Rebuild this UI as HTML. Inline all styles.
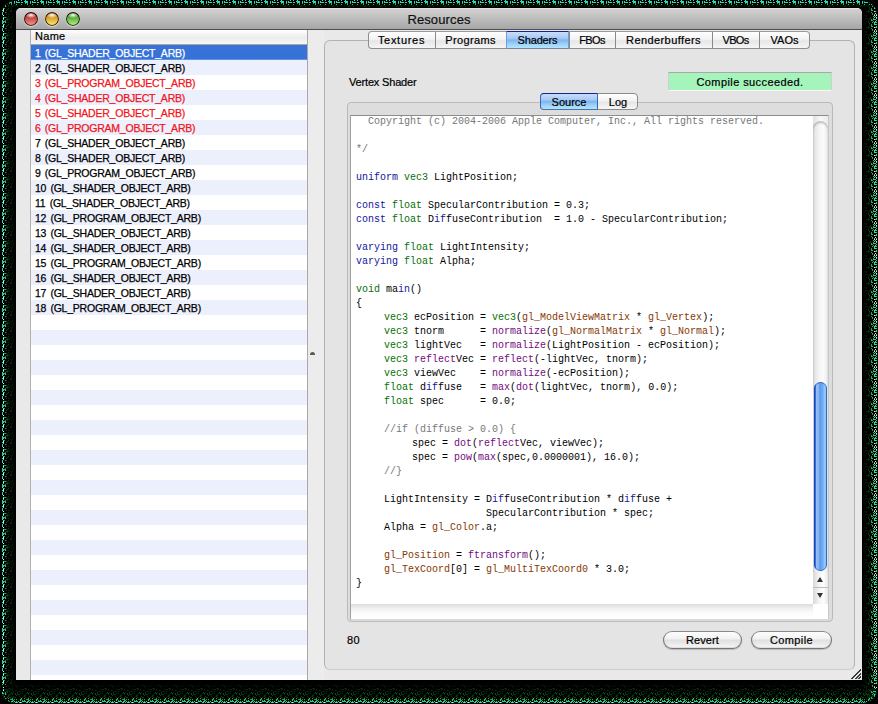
<!DOCTYPE html><html><head><meta charset='utf-8'><style>
*{margin:0;padding:0;box-sizing:border-box}
html,body{width:878px;height:704px;overflow:hidden;background:#000}
body{position:relative;font-family:"Liberation Sans", sans-serif;}
.a{position:absolute}
.t{position:absolute;white-space:pre;font-family:"Liberation Sans", sans-serif;font-size:11px;line-height:14px;color:#000;-webkit-text-stroke:0.2px currentColor}
.code{position:absolute;left:351px;top:116px;width:462px;height:488px;background:#fff;overflow:hidden}
.cl{position:absolute;left:5px;white-space:pre;font-family:"Liberation Mono", monospace;font-size:10px;line-height:14px;color:#000;tab-size:28px;-moz-tab-size:28px}
.k{color:#1414a0} .ty{color:#067006} .f{color:#720a82} .g{color:#863804} .c{color:#777777}
.tl{position:absolute;width:14px;height:14px;border-radius:50%}
</style></head><body><svg class="a" style="left:0;top:0" width="878" height="704"><defs><pattern id="pb" patternUnits="userSpaceOnUse" width="16" height="24" patternTransform="translate(0,680)"><rect x="0" y="22" width="1" height="1" fill="#14e0ea"/><rect x="0" y="21" width="1" height="1" fill="#30d860"/><rect x="0" y="19" width="1" height="1" fill="#20b848"/><rect x="0" y="15" width="1" height="1" fill="#0a4317"/><rect x="0" y="10" width="1" height="1" fill="#031908"/><rect x="0" y="7" width="1" height="1" fill="#041c09"/><rect x="0" y="6" width="1" height="1" fill="#031908"/><rect x="0" y="5" width="1" height="1" fill="#021105"/><rect x="1" y="22" width="1" height="1" fill="#30d860"/><rect x="1" y="14" width="1" height="1" fill="#072f10"/><rect x="1" y="13" width="1" height="1" fill="#073010"/><rect x="1" y="12" width="1" height="1" fill="#073211"/><rect x="1" y="4" width="1" height="1" fill="#010802"/><rect x="2" y="21" width="1" height="1" fill="#14e0ea"/><rect x="2" y="14" width="1" height="1" fill="#083b14"/><rect x="2" y="11" width="1" height="1" fill="#041c09"/><rect x="2" y="6" width="1" height="1" fill="#031808"/><rect x="2" y="5" width="1" height="1" fill="#010d04"/><rect x="3" y="22" width="1" height="1" fill="#30d860"/><rect x="3" y="16" width="1" height="1" fill="#073010"/><rect x="3" y="15" width="1" height="1" fill="#05220b"/><rect x="3" y="14" width="1" height="1" fill="#083612"/><rect x="3" y="11" width="1" height="1" fill="#04200b"/><rect x="3" y="6" width="1" height="1" fill="#031808"/><rect x="4" y="22" width="1" height="1" fill="#f0e8e8"/><rect x="4" y="20" width="1" height="1" fill="#2cc858"/><rect x="4" y="19" width="1" height="1" fill="#2cc858"/><rect x="4" y="17" width="1" height="1" fill="#083713"/><rect x="4" y="13" width="1" height="1" fill="#062d0f"/><rect x="4" y="11" width="1" height="1" fill="#062c0f"/><rect x="4" y="9" width="1" height="1" fill="#05220b"/><rect x="5" y="22" width="1" height="1" fill="#14e0ea"/><rect x="5" y="19" width="1" height="1" fill="#18a040"/><rect x="5" y="18" width="1" height="1" fill="#2cc858"/><rect x="5" y="9" width="1" height="1" fill="#04210b"/><rect x="5" y="6" width="1" height="1" fill="#031708"/><rect x="5" y="5" width="1" height="1" fill="#010a03"/><rect x="6" y="21" width="1" height="1" fill="#14e0ea"/><rect x="6" y="20" width="1" height="1" fill="#20b848"/><rect x="6" y="17" width="1" height="1" fill="#083913"/><rect x="6" y="13" width="1" height="1" fill="#05220b"/><rect x="6" y="11" width="1" height="1" fill="#073211"/><rect x="6" y="9" width="1" height="1" fill="#031a09"/><rect x="6" y="4" width="1" height="1" fill="#010802"/><rect x="7" y="21" width="1" height="1" fill="#14e0ea"/><rect x="7" y="16" width="1" height="1" fill="#05250c"/><rect x="7" y="9" width="1" height="1" fill="#05250c"/><rect x="7" y="5" width="1" height="1" fill="#010c04"/><rect x="7" y="4" width="1" height="1" fill="#000602"/><rect x="8" y="21" width="1" height="1" fill="#30d860"/><rect x="8" y="20" width="1" height="1" fill="#2cc858"/><rect x="8" y="18" width="1" height="1" fill="#18a040"/><rect x="8" y="16" width="1" height="1" fill="#0a4919"/><rect x="8" y="15" width="1" height="1" fill="#073010"/><rect x="8" y="8" width="1" height="1" fill="#05230c"/><rect x="8" y="4" width="1" height="1" fill="#010a03"/><rect x="9" y="21" width="1" height="1" fill="#30d860"/><rect x="9" y="17" width="1" height="1" fill="#0a4819"/><rect x="9" y="15" width="1" height="1" fill="#062e10"/><rect x="9" y="14" width="1" height="1" fill="#083612"/><rect x="9" y="10" width="1" height="1" fill="#031708"/><rect x="9" y="9" width="1" height="1" fill="#031607"/><rect x="9" y="8" width="1" height="1" fill="#05250c"/><rect x="9" y="6" width="1" height="1" fill="#021206"/><rect x="10" y="22" width="1" height="1" fill="#30d860"/><rect x="10" y="19" width="1" height="1" fill="#18a040"/><rect x="10" y="17" width="1" height="1" fill="#05270d"/><rect x="10" y="13" width="1" height="1" fill="#072f10"/><rect x="10" y="9" width="1" height="1" fill="#06290e"/><rect x="10" y="8" width="1" height="1" fill="#041e0a"/><rect x="11" y="22" width="1" height="1" fill="#14e0ea"/><rect x="11" y="21" width="1" height="1" fill="#30d860"/><rect x="11" y="19" width="1" height="1" fill="#20b848"/><rect x="11" y="13" width="1" height="1" fill="#072f10"/><rect x="11" y="12" width="1" height="1" fill="#083713"/><rect x="11" y="5" width="1" height="1" fill="#020f05"/><rect x="11" y="4" width="1" height="1" fill="#010702"/><rect x="12" y="21" width="1" height="1" fill="#14e0ea"/><rect x="12" y="20" width="1" height="1" fill="#18a040"/><rect x="12" y="19" width="1" height="1" fill="#20b848"/><rect x="12" y="18" width="1" height="1" fill="#20b848"/><rect x="12" y="17" width="1" height="1" fill="#062d0f"/><rect x="12" y="14" width="1" height="1" fill="#062c0f"/><rect x="12" y="13" width="1" height="1" fill="#0a4417"/><rect x="12" y="10" width="1" height="1" fill="#05250c"/><rect x="12" y="9" width="1" height="1" fill="#04210b"/><rect x="12" y="6" width="1" height="1" fill="#010c04"/><rect x="13" y="22" width="1" height="1" fill="#30d860"/><rect x="13" y="20" width="1" height="1" fill="#2cc858"/><rect x="13" y="16" width="1" height="1" fill="#093d15"/><rect x="13" y="12" width="1" height="1" fill="#073311"/><rect x="13" y="5" width="1" height="1" fill="#010903"/><rect x="14" y="21" width="1" height="1" fill="#14e0ea"/><rect x="14" y="19" width="1" height="1" fill="#18a040"/><rect x="14" y="17" width="1" height="1" fill="#094217"/><rect x="14" y="5" width="1" height="1" fill="#021206"/><rect x="14" y="4" width="1" height="1" fill="#010a03"/><rect x="15" y="22" width="1" height="1" fill="#14e0ea"/><rect x="15" y="17" width="1" height="1" fill="#0a4618"/><rect x="15" y="14" width="1" height="1" fill="#0b4a19"/><rect x="15" y="13" width="1" height="1" fill="#094217"/><rect x="15" y="10" width="1" height="1" fill="#072f10"/><rect x="15" y="6" width="1" height="1" fill="#020e04"/><rect x="15" y="5" width="1" height="1" fill="#021306"/></pattern><pattern id="pl" patternUnits="userSpaceOnUse" width="16" height="16"><rect x="8" y="0" width="1" height="1" fill="#062d0f"/><rect x="12" y="0" width="1" height="1" fill="#021306"/><rect x="13" y="0" width="1" height="1" fill="#010d04"/><rect x="3" y="1" width="1" height="1" fill="#14e0ea"/><rect x="4" y="1" width="1" height="1" fill="#18a040"/><rect x="5" y="1" width="1" height="1" fill="#20b848"/><rect x="6" y="1" width="1" height="1" fill="#094116"/><rect x="7" y="1" width="1" height="1" fill="#04200b"/><rect x="9" y="1" width="1" height="1" fill="#041e0a"/><rect x="12" y="1" width="1" height="1" fill="#041b09"/><rect x="3" y="2" width="1" height="1" fill="#f0e8e8"/><rect x="7" y="2" width="1" height="1" fill="#072f10"/><rect x="8" y="2" width="1" height="1" fill="#04210b"/><rect x="9" y="2" width="1" height="1" fill="#04210b"/><rect x="11" y="2" width="1" height="1" fill="#041e0a"/><rect x="3" y="3" width="1" height="1" fill="#14e0ea"/><rect x="6" y="3" width="1" height="1" fill="#0c521c"/><rect x="7" y="3" width="1" height="1" fill="#093f16"/><rect x="9" y="3" width="1" height="1" fill="#073111"/><rect x="12" y="3" width="1" height="1" fill="#010c04"/><rect x="13" y="3" width="1" height="1" fill="#021206"/><rect x="2" y="4" width="1" height="1" fill="#30d860"/><rect x="5" y="4" width="1" height="1" fill="#18a040"/><rect x="7" y="4" width="1" height="1" fill="#073311"/><rect x="11" y="4" width="1" height="1" fill="#031908"/><rect x="13" y="4" width="1" height="1" fill="#010d04"/><rect x="2" y="5" width="1" height="1" fill="#14e0ea"/><rect x="3" y="5" width="1" height="1" fill="#30d860"/><rect x="4" y="5" width="1" height="1" fill="#2cc858"/><rect x="5" y="5" width="1" height="1" fill="#20b848"/><rect x="12" y="5" width="1" height="1" fill="#031507"/><rect x="2" y="6" width="1" height="1" fill="#30d860"/><rect x="3" y="6" width="1" height="1" fill="#14e0ea"/><rect x="5" y="6" width="1" height="1" fill="#2cc858"/><rect x="6" y="6" width="1" height="1" fill="#083b14"/><rect x="8" y="6" width="1" height="1" fill="#083713"/><rect x="12" y="6" width="1" height="1" fill="#021206"/><rect x="13" y="6" width="1" height="1" fill="#021105"/><rect x="2" y="7" width="1" height="1" fill="#14e0ea"/><rect x="10" y="7" width="1" height="1" fill="#041e0a"/><rect x="11" y="7" width="1" height="1" fill="#031808"/><rect x="3" y="8" width="1" height="1" fill="#14e0ea"/><rect x="4" y="8" width="1" height="1" fill="#18a040"/><rect x="8" y="8" width="1" height="1" fill="#083913"/><rect x="11" y="8" width="1" height="1" fill="#031607"/><rect x="3" y="9" width="1" height="1" fill="#f0e8e8"/><rect x="7" y="9" width="1" height="1" fill="#0a4417"/><rect x="11" y="9" width="1" height="1" fill="#031607"/><rect x="2" y="10" width="1" height="1" fill="#14e0ea"/><rect x="3" y="10" width="1" height="1" fill="#f0e8e8"/><rect x="6" y="10" width="1" height="1" fill="#0b4d1a"/><rect x="10" y="10" width="1" height="1" fill="#062e10"/><rect x="11" y="10" width="1" height="1" fill="#031708"/><rect x="13" y="10" width="1" height="1" fill="#010802"/><rect x="3" y="11" width="1" height="1" fill="#30d860"/><rect x="10" y="11" width="1" height="1" fill="#062e10"/><rect x="11" y="11" width="1" height="1" fill="#041c09"/><rect x="13" y="11" width="1" height="1" fill="#021005"/><rect x="2" y="12" width="1" height="1" fill="#30d860"/><rect x="5" y="12" width="1" height="1" fill="#20b848"/><rect x="6" y="12" width="1" height="1" fill="#0c521c"/><rect x="12" y="12" width="1" height="1" fill="#020f05"/><rect x="2" y="13" width="1" height="1" fill="#14e0ea"/><rect x="11" y="13" width="1" height="1" fill="#031a09"/><rect x="13" y="13" width="1" height="1" fill="#010b03"/><rect x="2" y="14" width="1" height="1" fill="#14e0ea"/><rect x="6" y="14" width="1" height="1" fill="#083612"/><rect x="8" y="14" width="1" height="1" fill="#04200b"/><rect x="9" y="14" width="1" height="1" fill="#073211"/><rect x="3" y="15" width="1" height="1" fill="#f0e8e8"/><rect x="12" y="15" width="1" height="1" fill="#031507"/></pattern><pattern id="pt" patternUnits="userSpaceOnUse" width="16" height="8"><rect x="0" y="1" width="1" height="1" fill="#30d860"/><rect x="0" y="2" width="1" height="1" fill="#14e0ea"/><rect x="0" y="4" width="1" height="1" fill="#2cc858"/><rect x="0" y="5" width="1" height="1" fill="#04200b"/><rect x="1" y="2" width="1" height="1" fill="#30d860"/><rect x="1" y="6" width="1" height="1" fill="#05230c"/><rect x="2" y="0" width="1" height="1" fill="#14e0ea"/><rect x="2" y="2" width="1" height="1" fill="#14e0ea"/><rect x="3" y="2" width="1" height="1" fill="#14e0ea"/><rect x="4" y="5" width="1" height="1" fill="#05230c"/><rect x="5" y="0" width="1" height="1" fill="#14e0ea"/><rect x="5" y="2" width="1" height="1" fill="#14e0ea"/><rect x="5" y="4" width="1" height="1" fill="#2cc858"/><rect x="6" y="2" width="1" height="1" fill="#30d860"/><rect x="8" y="1" width="1" height="1" fill="#30d860"/><rect x="8" y="5" width="1" height="1" fill="#062b0f"/><rect x="9" y="0" width="1" height="1" fill="#14e0ea"/><rect x="9" y="1" width="1" height="1" fill="#14e0ea"/><rect x="9" y="2" width="1" height="1" fill="#30d860"/><rect x="9" y="3" width="1" height="1" fill="#20b848"/><rect x="10" y="1" width="1" height="1" fill="#14e0ea"/><rect x="10" y="2" width="1" height="1" fill="#14e0ea"/><rect x="11" y="1" width="1" height="1" fill="#14e0ea"/><rect x="11" y="2" width="1" height="1" fill="#30d860"/><rect x="11" y="3" width="1" height="1" fill="#2cc858"/><rect x="11" y="4" width="1" height="1" fill="#18a040"/><rect x="11" y="5" width="1" height="1" fill="#062c0f"/><rect x="12" y="6" width="1" height="1" fill="#062b0f"/><rect x="13" y="5" width="1" height="1" fill="#073512"/><rect x="13" y="6" width="1" height="1" fill="#031507"/><rect x="14" y="1" width="1" height="1" fill="#14e0ea"/><rect x="14" y="2" width="1" height="1" fill="#14e0ea"/><rect x="14" y="3" width="1" height="1" fill="#20b848"/><rect x="14" y="6" width="1" height="1" fill="#031908"/><rect x="15" y="5" width="1" height="1" fill="#072f10"/></pattern><pattern id="pr" patternUnits="userSpaceOnUse" width="16" height="16" patternTransform="translate(862,0)"><rect x="13" y="0" width="1" height="1" fill="#14e0ea"/><rect x="11" y="0" width="1" height="1" fill="#2cc858"/><rect x="4" y="0" width="1" height="1" fill="#062d0f"/><rect x="1" y="0" width="1" height="1" fill="#010802"/><rect x="14" y="1" width="1" height="1" fill="#f0e8e8"/><rect x="12" y="1" width="1" height="1" fill="#30d860"/><rect x="8" y="1" width="1" height="1" fill="#062e10"/><rect x="1" y="1" width="1" height="1" fill="#020f05"/><rect x="14" y="2" width="1" height="1" fill="#14e0ea"/><rect x="11" y="2" width="1" height="1" fill="#20b848"/><rect x="8" y="2" width="1" height="1" fill="#094016"/><rect x="7" y="2" width="1" height="1" fill="#083813"/><rect x="5" y="2" width="1" height="1" fill="#031808"/><rect x="4" y="2" width="1" height="1" fill="#05220b"/><rect x="3" y="2" width="1" height="1" fill="#021105"/><rect x="13" y="3" width="1" height="1" fill="#30d860"/><rect x="12" y="3" width="1" height="1" fill="#30d860"/><rect x="11" y="3" width="1" height="1" fill="#2cc858"/><rect x="9" y="3" width="1" height="1" fill="#18a040"/><rect x="6" y="3" width="1" height="1" fill="#05260d"/><rect x="3" y="3" width="1" height="1" fill="#041f0a"/><rect x="1" y="3" width="1" height="1" fill="#020e04"/><rect x="14" y="4" width="1" height="1" fill="#14e0ea"/><rect x="10" y="4" width="1" height="1" fill="#18a040"/><rect x="9" y="4" width="1" height="1" fill="#2cc858"/><rect x="7" y="4" width="1" height="1" fill="#06280e"/><rect x="2" y="4" width="1" height="1" fill="#010d04"/><rect x="1" y="4" width="1" height="1" fill="#010a03"/><rect x="13" y="5" width="1" height="1" fill="#14e0ea"/><rect x="11" y="5" width="1" height="1" fill="#18a040"/><rect x="6" y="5" width="1" height="1" fill="#083713"/><rect x="4" y="5" width="1" height="1" fill="#062d0f"/><rect x="14" y="6" width="1" height="1" fill="#30d860"/><rect x="13" y="6" width="1" height="1" fill="#30d860"/><rect x="12" y="6" width="1" height="1" fill="#14e0ea"/><rect x="10" y="6" width="1" height="1" fill="#20b848"/><rect x="7" y="6" width="1" height="1" fill="#05220b"/><rect x="6" y="6" width="1" height="1" fill="#062a0e"/><rect x="2" y="6" width="1" height="1" fill="#031407"/><rect x="1" y="6" width="1" height="1" fill="#010802"/><rect x="12" y="7" width="1" height="1" fill="#14e0ea"/><rect x="7" y="7" width="1" height="1" fill="#093e15"/><rect x="3" y="7" width="1" height="1" fill="#021105"/><rect x="1" y="7" width="1" height="1" fill="#020e04"/><rect x="14" y="8" width="1" height="1" fill="#30d860"/><rect x="13" y="8" width="1" height="1" fill="#14e0ea"/><rect x="12" y="8" width="1" height="1" fill="#14e0ea"/><rect x="9" y="8" width="1" height="1" fill="#18a040"/><rect x="7" y="8" width="1" height="1" fill="#05220b"/><rect x="9" y="9" width="1" height="1" fill="#20b848"/><rect x="7" y="9" width="1" height="1" fill="#093d15"/><rect x="3" y="9" width="1" height="1" fill="#041c09"/><rect x="14" y="10" width="1" height="1" fill="#30d860"/><rect x="10" y="10" width="1" height="1" fill="#2cc858"/><rect x="9" y="10" width="1" height="1" fill="#20b848"/><rect x="6" y="10" width="1" height="1" fill="#05230c"/><rect x="4" y="10" width="1" height="1" fill="#031507"/><rect x="14" y="11" width="1" height="1" fill="#30d860"/><rect x="13" y="11" width="1" height="1" fill="#30d860"/><rect x="12" y="11" width="1" height="1" fill="#f0e8e8"/><rect x="7" y="11" width="1" height="1" fill="#062e10"/><rect x="6" y="11" width="1" height="1" fill="#083913"/><rect x="5" y="11" width="1" height="1" fill="#041f0a"/><rect x="4" y="11" width="1" height="1" fill="#031708"/><rect x="9" y="12" width="1" height="1" fill="#18a040"/><rect x="6" y="12" width="1" height="1" fill="#05250c"/><rect x="13" y="13" width="1" height="1" fill="#f0e8e8"/><rect x="10" y="13" width="1" height="1" fill="#20b848"/><rect x="1" y="13" width="1" height="1" fill="#010b03"/><rect x="14" y="14" width="1" height="1" fill="#30d860"/><rect x="12" y="14" width="1" height="1" fill="#30d860"/><rect x="10" y="14" width="1" height="1" fill="#18a040"/><rect x="3" y="14" width="1" height="1" fill="#021105"/><rect x="1" y="14" width="1" height="1" fill="#010a03"/><rect x="14" y="15" width="1" height="1" fill="#f0e8e8"/><rect x="12" y="15" width="1" height="1" fill="#f0e8e8"/><rect x="4" y="15" width="1" height="1" fill="#05250c"/><rect x="2" y="15" width="1" height="1" fill="#031708"/></pattern></defs><rect x="0" y="0" width="16" height="704" fill="url(#pl)"/><rect x="862" y="0" width="16" height="704" fill="url(#pr)"/><rect x="0" y="0" width="878" height="8" fill="url(#pt)"/><rect x="0" y="680" width="878" height="24" fill="url(#pb)"/></svg><div class="a" style="left:0;top:0;width:14px;height:14px;background:radial-gradient(circle at 14px 14px,transparent 12px,#000 13px)"></div><div class="a" style="left:864px;top:0;width:14px;height:14px;background:radial-gradient(circle at 0 14px,transparent 12px,#000 13px)"></div><div class="a" style="left:0;top:690px;width:14px;height:14px;background:radial-gradient(circle at 14px 0,transparent 12px,#000 13px)"></div><div class="a" style="left:864px;top:690px;width:14px;height:14px;background:radial-gradient(circle at 0 0,transparent 12px,#000 13px)"></div><div class="a" style="left:16px;top:8px;width:846px;height:672px;background:#e9e9e9;border-radius:5px 5px 0 0;overflow:hidden"><div class="a" style="left:0;top:0;width:846px;height:21px;background:linear-gradient(#e2e2e2 0,#e2e2e2 1px,#d2d2d2 1px,#a6a6a6)"></div><div class="a" style="left:0;top:21px;width:846px;height:1px;background:#4e4e4e"></div></div><div class="tl" style="left:24px;top:12px;background:radial-gradient(ellipse 5.5px 3px at 50% 22%,rgba(255,255,255,.95),rgba(255,255,255,.35) 70%,rgba(255,255,255,0) 100%),linear-gradient(#a8201c 15%,#f59a92 95%);box-shadow:inset 0 0 0 1px rgba(25,5,5,.85),inset 0 1px 1px rgba(0,0,0,.4),0 1px 1px rgba(255,255,255,.6)"></div><div class="tl" style="left:45px;top:12px;background:radial-gradient(ellipse 5.5px 3px at 50% 22%,rgba(255,255,255,.95),rgba(255,255,255,.35) 70%,rgba(255,255,255,0) 100%),linear-gradient(#c87808 15%,#fcee70 95%);box-shadow:inset 0 0 0 1px rgba(25,5,5,.85),inset 0 1px 1px rgba(0,0,0,.4),0 1px 1px rgba(255,255,255,.6)"></div><div class="tl" style="left:66px;top:12px;background:radial-gradient(ellipse 5.5px 3px at 50% 22%,rgba(255,255,255,.95),rgba(255,255,255,.35) 70%,rgba(255,255,255,0) 100%),linear-gradient(#2f8a14 15%,#b4f58a 95%);box-shadow:inset 0 0 0 1px rgba(25,5,5,.85),inset 0 1px 1px rgba(0,0,0,.4),0 1px 1px rgba(255,255,255,.6)"></div><div class="t" style="left:0;top:12px;width:878px;text-align:center;font-size:13px;line-height:16px;color:#111;letter-spacing:0.12px">Resources</div><div class="a" style="left:16px;top:30px;width:14px;height:650px;background:#e9e9e9"></div><div class="a" style="left:30px;top:30px;width:1px;height:650px;background:#b0b0b0"></div><div class="a" style="left:31px;top:30px;width:276px;height:650px;background:#fff;overflow:hidden"><div class="a" style="left:0;top:0;width:276px;height:14px;background:linear-gradient(#ffffff 0,#f9f9f9 2px,#ececec 8px,#f7f7f7)"></div><div class="a" style="left:0;top:14px;width:276px;height:1px;background:#a8a8a8"></div><div class="t" style="left:4px;top:-1px;letter-spacing:0.3px">Name</div><div class="a" style="left:0;top:15px;width:276px;height:15px;background:linear-gradient(#3a73d6,#3472d9 90%,#7ea3e2)"></div><div class="a" style="left:0;top:30px;width:276px;height:15px;background:#eceffc"></div><div class="a" style="left:0;top:60px;width:276px;height:15px;background:#eceffc"></div><div class="a" style="left:0;top:90px;width:276px;height:15px;background:#eceffc"></div><div class="a" style="left:0;top:120px;width:276px;height:15px;background:#eceffc"></div><div class="a" style="left:0;top:150px;width:276px;height:15px;background:#eceffc"></div><div class="a" style="left:0;top:180px;width:276px;height:15px;background:#eceffc"></div><div class="a" style="left:0;top:210px;width:276px;height:15px;background:#eceffc"></div><div class="a" style="left:0;top:240px;width:276px;height:15px;background:#eceffc"></div><div class="a" style="left:0;top:270px;width:276px;height:15px;background:#eceffc"></div><div class="a" style="left:0;top:300px;width:276px;height:15px;background:#eceffc"></div><div class="a" style="left:0;top:330px;width:276px;height:15px;background:#eceffc"></div><div class="a" style="left:0;top:360px;width:276px;height:15px;background:#eceffc"></div><div class="a" style="left:0;top:390px;width:276px;height:15px;background:#eceffc"></div><div class="a" style="left:0;top:420px;width:276px;height:15px;background:#eceffc"></div><div class="a" style="left:0;top:450px;width:276px;height:15px;background:#eceffc"></div><div class="a" style="left:0;top:480px;width:276px;height:15px;background:#eceffc"></div><div class="a" style="left:0;top:510px;width:276px;height:15px;background:#eceffc"></div><div class="a" style="left:0;top:540px;width:276px;height:15px;background:#eceffc"></div><div class="a" style="left:0;top:570px;width:276px;height:15px;background:#eceffc"></div><div class="a" style="left:0;top:600px;width:276px;height:15px;background:#eceffc"></div><div class="a" style="left:0;top:630px;width:276px;height:15px;background:#eceffc"></div><div class="t" style="left:4px;top:16px;color:#fff;letter-spacing:-0.23px;word-spacing:1.5px;font-size:10.5px;-webkit-text-stroke:0.25px #fff">1 (GL_SHADER_OBJECT_ARB)</div><div class="t" style="left:4px;top:31px;color:#000;letter-spacing:-0.23px;word-spacing:1.5px;font-size:10.5px;-webkit-text-stroke:0.25px #000">2 (GL_SHADER_OBJECT_ARB)</div><div class="t" style="left:4px;top:46px;color:#f2141a;letter-spacing:-0.23px;word-spacing:1.5px;font-size:10.5px;-webkit-text-stroke:0.25px #f2141a">3 (GL_PROGRAM_OBJECT_ARB)</div><div class="t" style="left:4px;top:61px;color:#f2141a;letter-spacing:-0.23px;word-spacing:1.5px;font-size:10.5px;-webkit-text-stroke:0.25px #f2141a">4 (GL_SHADER_OBJECT_ARB)</div><div class="t" style="left:4px;top:76px;color:#f2141a;letter-spacing:-0.23px;word-spacing:1.5px;font-size:10.5px;-webkit-text-stroke:0.25px #f2141a">5 (GL_SHADER_OBJECT_ARB)</div><div class="t" style="left:4px;top:91px;color:#f2141a;letter-spacing:-0.23px;word-spacing:1.5px;font-size:10.5px;-webkit-text-stroke:0.25px #f2141a">6 (GL_PROGRAM_OBJECT_ARB)</div><div class="t" style="left:4px;top:106px;color:#000;letter-spacing:-0.23px;word-spacing:1.5px;font-size:10.5px;-webkit-text-stroke:0.25px #000">7 (GL_SHADER_OBJECT_ARB)</div><div class="t" style="left:4px;top:121px;color:#000;letter-spacing:-0.23px;word-spacing:1.5px;font-size:10.5px;-webkit-text-stroke:0.25px #000">8 (GL_SHADER_OBJECT_ARB)</div><div class="t" style="left:4px;top:136px;color:#000;letter-spacing:-0.23px;word-spacing:1.5px;font-size:10.5px;-webkit-text-stroke:0.25px #000">9 (GL_PROGRAM_OBJECT_ARB)</div><div class="t" style="left:4px;top:151px;color:#000;letter-spacing:-0.23px;word-spacing:1.5px;font-size:10.5px;-webkit-text-stroke:0.25px #000">10 (GL_SHADER_OBJECT_ARB)</div><div class="t" style="left:4px;top:166px;color:#000;letter-spacing:-0.23px;word-spacing:1.5px;font-size:10.5px;-webkit-text-stroke:0.25px #000">11 (GL_SHADER_OBJECT_ARB)</div><div class="t" style="left:4px;top:181px;color:#000;letter-spacing:-0.23px;word-spacing:1.5px;font-size:10.5px;-webkit-text-stroke:0.25px #000">12 (GL_PROGRAM_OBJECT_ARB)</div><div class="t" style="left:4px;top:196px;color:#000;letter-spacing:-0.23px;word-spacing:1.5px;font-size:10.5px;-webkit-text-stroke:0.25px #000">13 (GL_SHADER_OBJECT_ARB)</div><div class="t" style="left:4px;top:211px;color:#000;letter-spacing:-0.23px;word-spacing:1.5px;font-size:10.5px;-webkit-text-stroke:0.25px #000">14 (GL_SHADER_OBJECT_ARB)</div><div class="t" style="left:4px;top:226px;color:#000;letter-spacing:-0.23px;word-spacing:1.5px;font-size:10.5px;-webkit-text-stroke:0.25px #000">15 (GL_PROGRAM_OBJECT_ARB)</div><div class="t" style="left:4px;top:241px;color:#000;letter-spacing:-0.23px;word-spacing:1.5px;font-size:10.5px;-webkit-text-stroke:0.25px #000">16 (GL_SHADER_OBJECT_ARB)</div><div class="t" style="left:4px;top:256px;color:#000;letter-spacing:-0.23px;word-spacing:1.5px;font-size:10.5px;-webkit-text-stroke:0.25px #000">17 (GL_SHADER_OBJECT_ARB)</div><div class="t" style="left:4px;top:271px;color:#000;letter-spacing:-0.23px;word-spacing:1.5px;font-size:10.5px;-webkit-text-stroke:0.25px #000">18 (GL_PROGRAM_OBJECT_ARB)</div></div><div class="a" style="left:307px;top:30px;width:1px;height:650px;background:#a8a8a8"></div><div class="a" style="left:308px;top:30px;width:16px;height:650px;background:#ececec"></div><div class="a" style="left:310px;top:352px;width:5px;height:3px;border-radius:3px 3px 0 0;background:#5a5a5a"></div><div class="a" style="left:324px;top:40px;width:531px;height:630px;border:1px solid #b2b2b2;border-bottom-color:#cdcdcd;border-radius:6px;background:#e4e4e4"></div><div class="a" style="left:368px;top:31px;width:442px;height:18px;border:1px solid #8e8e8e;border-top-color:#9a9a9a;border-radius:4px;background:linear-gradient(#ffffff,#f3f3f3 45%,#e6e6e6 55%,#f5f5f5)"></div><div class="t" style="left:368px;top:33px;width:67px;text-align:center;letter-spacing:0.7px">Textures</div><div class="a" style="left:435px;top:32px;width:1px;height:16px;background:#8a8a8a"></div><div class="t" style="left:435px;top:33px;width:71px;text-align:center;letter-spacing:0.36px">Programs</div><div class="a" style="left:506px;top:31px;width:63px;height:18px;border:1px solid #6f9ddc;border-top-color:#16258a;border-bottom-color:#7a8698;background:linear-gradient(#c8defa,#a6c8f4 40%,#7fb4ef 50%,#9cd2f8 75%,#b4e6fd)"></div><div class="t" style="left:506px;top:33px;width:63px;text-align:center;letter-spacing:-0.17px">Shaders</div><div class="a" style="left:569px;top:32px;width:1px;height:16px;background:#8a8a8a"></div><div class="t" style="left:569px;top:33px;width:46px;text-align:center;letter-spacing:-0.67px">FBOs</div><div class="a" style="left:615px;top:32px;width:1px;height:16px;background:#8a8a8a"></div><div class="t" style="left:615px;top:33px;width:97px;text-align:center;letter-spacing:0.42px">Renderbuffers</div><div class="a" style="left:712px;top:32px;width:1px;height:16px;background:#8a8a8a"></div><div class="t" style="left:712px;top:33px;width:47px;text-align:center;letter-spacing:-0.67px">VBOs</div><div class="a" style="left:759px;top:32px;width:1px;height:16px;background:#8a8a8a"></div><div class="t" style="left:759px;top:33px;width:51px;text-align:center;letter-spacing:0px">VAOs</div><div class="t" style="left:349px;top:75px;letter-spacing:-0.17px">Vertex Shader</div><div class="a" style="left:668px;top:72px;width:164px;height:19px;background:#a4f4bb;border-top:1px solid #a8a8a8;border-left:1px solid #d0d0d0;border-right:1px solid #d0d0d0;border-bottom:1px solid #f8f8f8"></div><div class="t" style="left:668px;top:75px;width:164px;text-align:center;letter-spacing:0.41px">Compile succeeded.</div><div class="a" style="left:347px;top:102px;width:486px;height:520px;border:1px solid #bababa;border-radius:4px;background:#dddddd"></div><div class="a" style="left:350px;top:115px;width:479px;height:505px;background:#fff;border-top:1px solid #8c8c8c;border-left:1px solid #a0a0a0;border-right:1px solid #c8c8c8;border-bottom:1px solid #d8d8d8"></div><div class="a" style="left:540px;top:93px;width:98px;height:17px;border:1px solid #8c8c8c;border-radius:4px;background:linear-gradient(#ffffff,#f3f3f3 45%,#e6e6e6 55%,#f7f7f7)"></div><div class="a" style="left:540px;top:93px;width:58px;height:17px;border:1px solid #3a66b8;border-top-color:#16258a;border-bottom-color:#4a70b0;border-radius:4px 0 0 4px;background:linear-gradient(#c8defa,#a6c8f4 40%,#7fb4ef 50%,#9cd2f8 75%,#b4e6fd)"></div><div class="t" style="left:540px;top:95px;width:58px;text-align:center">Source</div><div class="t" style="left:598px;top:95px;width:40px;text-align:center">Log</div><div class="code"><div class="cl" style="top:-1px"><span class="c">  Copyright (c) 2004-2006 Apple Computer, Inc., All rights reserved.</span></div><div class="cl" style="top:27px"><span class="c">*/</span></div><div class="cl" style="top:55px"><span class="k">uniform</span> <span class="ty">vec3</span> LightPosition;</div><div class="cl" style="top:83px"><span class="k">const</span> <span class="ty">float</span> SpecularContribution = 0.3;</div><div class="cl" style="top:97px"><span class="k">const</span> <span class="ty">float</span> D<span class="k">if</span>fuseContribution  = 1.0 - SpecularContribution;</div><div class="cl" style="top:125px"><span class="k">varying</span> <span class="ty">float</span> LightIntensity;</div><div class="cl" style="top:139px"><span class="k">varying</span> <span class="ty">float</span> Alpha;</div><div class="cl" style="top:167px"><span class="ty">void</span> ma<span class="k">in</span>()</div><div class="cl" style="top:181px">{</div><div class="cl" style="top:195px">	<span class="ty">vec3</span> ecPosition = <span class="ty">vec3</span>(<span class="g">gl_ModelViewMatrix</span> * <span class="g">gl_Vertex</span>);</div><div class="cl" style="top:209px">	<span class="ty">vec3</span> tnorm      = <span class="f">normalize</span>(<span class="g">gl_NormalMatrix</span> * <span class="g">gl_Normal</span>);</div><div class="cl" style="top:223px">	<span class="ty">vec3</span> lightVec   = <span class="f">normalize</span>(LightPosition - ecPosition);</div><div class="cl" style="top:237px">	<span class="ty">vec3</span> <span class="f">reflect</span>Vec = <span class="f">reflect</span>(-lightVec, tnorm);</div><div class="cl" style="top:251px">	<span class="ty">vec3</span> viewVec    = <span class="f">normalize</span>(-ecPosition);</div><div class="cl" style="top:265px">	<span class="ty">float</span> d<span class="k">if</span>fuse   = <span class="f">max</span>(<span class="f">dot</span>(lightVec, tnorm), 0.0);</div><div class="cl" style="top:279px">	<span class="ty">float</span> spec      = 0.0;</div><div class="cl" style="top:307px">	<span class="c">//if (diffuse &gt; 0.0) {</span></div><div class="cl" style="top:321px">		spec = <span class="f">dot</span>(<span class="f">reflect</span>Vec, viewVec);</div><div class="cl" style="top:335px">		spec = <span class="f">pow</span>(<span class="f">max</span>(spec,0.0000001), 16.0);</div><div class="cl" style="top:349px">	<span class="c">//}</span></div><div class="cl" style="top:377px">	LightIntensity = D<span class="k">if</span>fuseContribution * d<span class="k">if</span>fuse +</div><div class="cl" style="top:391px">	                 SpecularContribution * spec;</div><div class="cl" style="top:405px">	Alpha = <span class="g">gl_Color</span>.a;</div><div class="cl" style="top:433px">	<span class="g">gl_Position</span> = <span class="f">ftransform</span>();</div><div class="cl" style="top:447px">	<span class="g">gl_TexCoord</span>[0] = <span class="g">gl_MultiTexCoord0</span> * 3.0;</div><div class="cl" style="top:461px">}</div></div><div class="a" style="left:351px;top:604px;width:462px;height:15px;background:linear-gradient(#dcdcdc,#f0f0f0 30%,#fcfcfc 60%,#fff)"></div><div class="a" style="left:813px;top:604px;width:15px;height:15px;background:#fff"></div><div class="a" style="left:813px;top:116px;width:15px;height:488px;background:linear-gradient(90deg,#c8c8c8 0,#dedede 1px,#f2f2f2 5px,#fcfcfc 9px,#eeeeee 14px);"></div><div class="a" style="left:813px;top:116px;width:15px;height:8px;background:linear-gradient(90deg,#e0e0e0,#f8f8f8 50%,#ececec)"></div><div class="a" style="left:813px;top:121px;width:15px;height:451px;border-radius:7.5px 7.5px 0 0;background:linear-gradient(90deg,#d4d4d4 0,#e6e6e6 2px,#f4f4f4 6px,#fcfcfc 10px,#ececec 15px);box-shadow:inset 0 2px 2px rgba(0,0,0,.22)"></div><div class="a" style="left:814px;top:382px;width:13px;height:189px;border-radius:6.5px;background:linear-gradient(90deg,#1a4cc8 0,#2458d4 10%,#94bef4 18%,#86b4f2 38%,#5a96ee 44%,#74b0f4 70%,#9ad6fb 86%,#4a84de 100%);box-shadow:inset 0 0 0 1px rgba(20,60,170,.55)"></div><div class="a" style="left:813px;top:572px;width:15px;height:32px;background:linear-gradient(90deg,#d8d8d8,#f4f4f4 40%,#fdfdfd 70%,#e8e8e8)"></div><div class="a" style="left:813px;top:587px;width:15px;height:1px;background:#bdbdbd"></div><div class="a" style="left:817px;top:577px;width:0;height:0;border-left:3.5px solid transparent;border-right:3.5px solid transparent;border-bottom:5.5px solid #333"></div><div class="a" style="left:817px;top:593px;width:0;height:0;border-left:3.5px solid transparent;border-right:3.5px solid transparent;border-top:5.5px solid #333"></div><div class="t" style="left:347px;top:633px;letter-spacing:0.5px">80</div><div class="a" style="left:663px;top:631px;width:79px;height:18px;border:1px solid #747474;border-top-color:#8a8a8a;border-radius:9px;background:linear-gradient(#fdfdfd 0,#f3f3f3 40%,#e0e0e0 52%,#ededed 80%,#fbfbfb 100%);box-shadow:inset 0 -1px 1px rgba(0,0,0,.12),0 1px 1px rgba(0,0,0,.18)"></div><div class="t" style="left:663px;top:633px;width:79px;text-align:center;letter-spacing:0.1px">Revert</div><div class="a" style="left:751px;top:631px;width:81px;height:18px;border:1px solid #747474;border-top-color:#8a8a8a;border-radius:9px;background:linear-gradient(#fdfdfd 0,#f3f3f3 40%,#e0e0e0 52%,#ededed 80%,#fbfbfb 100%);box-shadow:inset 0 -1px 1px rgba(0,0,0,.12),0 1px 1px rgba(0,0,0,.18)"></div><div class="t" style="left:751px;top:633px;width:81px;text-align:center;letter-spacing:0.4px">Compile</div><div class="a" style="left:849px;top:667px;width:12px;height:12px;background:linear-gradient(135deg,transparent 0,transparent 58%,#3a3a3a 56%,#3a3a3a 64%,transparent 64%,transparent 72%,#3a3a3a 72%,#3a3a3a 80%,transparent 80%,transparent 87%,#3a3a3a 87%,#3a3a3a 95%,transparent 94%)"></div></body></html>
